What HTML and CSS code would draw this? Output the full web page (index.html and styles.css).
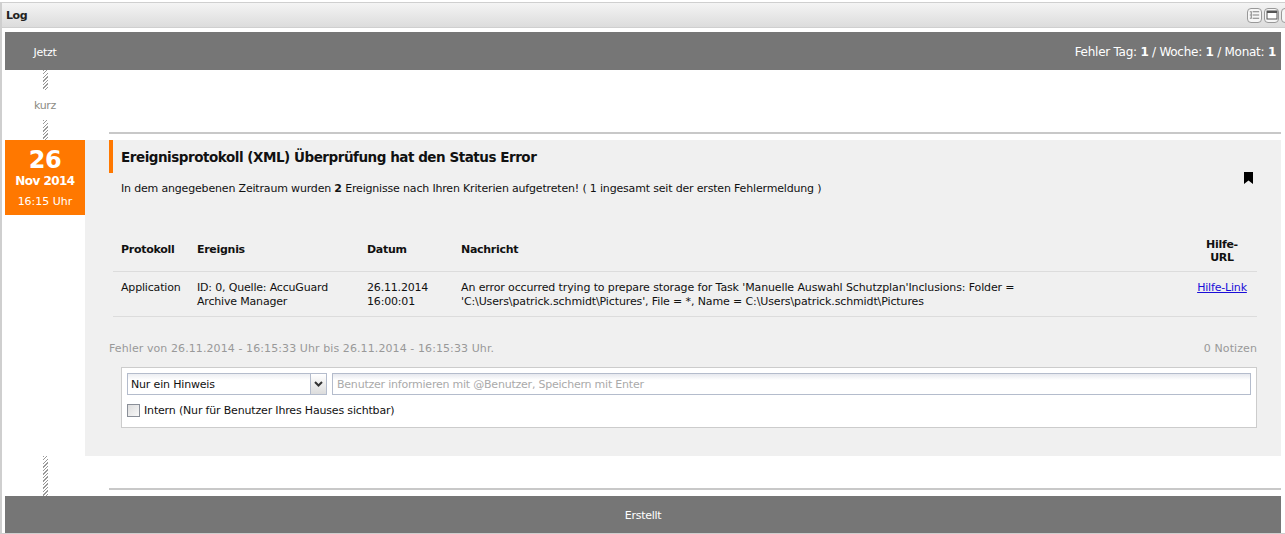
FILE: index.html
```html
<!DOCTYPE html>
<html lang="de">
<head>
<meta charset="utf-8">
<title>Log</title>
<link rel="stylesheet" href="styles.css">
</head>
<body>
<div class="window">
  <header class="titlebar">
    <span class="title">Log</span>
    <div class="tools">
      <span class="tool"><svg width="14" height="12" viewBox="0 0 14 12"><path d="M2 2.500h1M5 2.500h7M2 6h1M5 6h7M2 9.500h1M5 9.500h7M3.500 2v8" fill="none" stroke="#777"/></svg></span>
      <span class="tool"><svg width="12" height="10" viewBox="0 0 12 10"><rect x="1" y="1" width="10" height="8" fill="#fff" stroke="#555"/><path d="M1 2h10" stroke="#555" stroke-width="2"/></svg></span>
      <span class="tool"></span>
    </div>
  </header>
  <div class="content">
    <div class="bar bar-top">
      <span class="bar-label">Jetzt</span>
      <span class="stats">Fehler Tag: <b>1</b> / Woche: <b>1</b> / Monat: <b>1</b></span>
    </div>
    <div class="gap-row">
      <div class="axis">
        <div class="hatch h20"></div>
        <div class="kurz">kurz</div>
        <div class="hatch h20"></div>
      </div>
      <div class="rule-wrap"><div class="rule"></div></div>
    </div>
    <div class="event">
      <div class="date">
        <div class="day">26</div>
        <div class="month">Nov 2014</div>
        <div class="time">16:15 Uhr</div>
      </div>
      <div class="panel">
        <svg class="bookmark" width="9" height="12" viewBox="0 0 9 12"><path d="M0 0h9v12L4.500 8.500 0 12z" fill="#000"/></svg>
        <h2 class="event-title">Ereignisprotokoll (XML) Überprüfung hat den Status Error</h2>
        <p class="summary">In dem angegebenen Zeitraum wurden <b>2</b> Ereignisse nach Ihren Kriterien aufgetreten! ( 1 ingesamt seit der ersten Fehlermeldung )</p>
        <table class="log">
          <thead>
            <tr>
              <th class="c1">Protokoll</th>
              <th class="c2">Ereignis</th>
              <th class="c3">Datum</th>
              <th class="c4">Nachricht</th>
              <th class="c5">Hilfe-<br>URL</th>
            </tr>
          </thead>
          <tbody>
            <tr>
              <td>Application</td>
              <td>ID: 0, Quelle: AccuGuard Archive Manager</td>
              <td>26.11.2014 16:00:01</td>
              <td class="msg">An error occurred trying to prepare storage for Task 'Manuelle Auswahl Schutzplan'Inclusions: Folder = 'C:\Users\patrick.schmidt\Pictures', File = *, Name = C:\Users\patrick.schmidt\Pictures</td>
              <td class="link-cell"><a href="#">Hilfe-Link</a></td>
            </tr>
          </tbody>
        </table>
        <div class="meta">
          <span>Fehler von 26.11.2014 - 16:15:33 Uhr bis 26.11.2014 - 16:15:33 Uhr.</span>
          <span>0 Notizen</span>
        </div>
        <div class="note-box">
          <div class="note-row">
            <div class="select"><span class="select-text">Nur ein Hinweis</span><span class="select-btn"><svg width="9" height="6" viewBox="0 0 9 6"><path d="M1 1l3.500 3.500L8 1" fill="none" stroke="#333" stroke-width="2"/></svg></span></div>
            <div class="input">Benutzer informieren mit @Benutzer, Speichern mit Enter</div>
          </div>
          <label class="check"><span class="checkbox"></span>Intern (Nur für Benutzer Ihres Hauses sichtbar)</label>
        </div>
      </div>
    </div>
    <div class="gap-row end">
      <div class="axis"><div class="hatch h40"></div></div>
      <div class="rule-wrap"><div class="rule"></div></div>
    </div>
    <div class="bar bar-bottom">Erstellt</div>
  </div>
</div>
</body>
</html>
```
FILE: styles.css
```css
* { box-sizing: border-box; }
html, body { margin: 0; padding: 0; height: 100%; overflow: hidden; background: #fff; }
body {
  font-family: "DejaVu Sans", sans-serif;
  font-size: 11px;
  color: #111;
}
.window {
  margin-top: 2px;
  height: 532px;
  width: 1285px;
  border-top: 1px solid #cfcfcf;
  border-left: 2px solid #cfcfcf;
  border-bottom: 1px solid #cfcfcf;
  display: flex;
  flex-direction: column;
}
.titlebar {
  height: 25px;
  flex: none;
  display: flex;
  align-items: center;
  justify-content: space-between;
  background: linear-gradient(#f4f4f4, #dcdcdc);
  border-bottom: 1px solid #cfcfcf;
  padding-left: 4px;
  overflow: hidden;
}
.title { font-weight: 700; font-size: 11px; color: #222; letter-spacing: -.4px; }
.tools { display: flex; gap: 2px; margin-right: -11px; }
.tool {
  width: 15px;
  height: 15px;
  flex: none;
  border: 1px solid #999;
  border-radius: 4px;
  background: #f6f6f6;
  display: flex;
  align-items: center;
  justify-content: center;
}
.content {
  flex: 1;
  padding: 4px 0 0 3px;
  display: flex;
  flex-direction: column;
}
.bar {
  height: 38px;
  flex: none;
  background: #767676;
  color: #fff;
  display: flex;
  align-items: center;
  width: 1276px;
  letter-spacing: -.3px;
}
.bar-top { justify-content: space-between; padding: 2px 5px 0 0; }
.bar-label { width: 80px; text-align: center; }
.bar-bottom { justify-content: center; height: 37px; padding-top: 2px; }
.stats { font-size: 12px; letter-spacing: -.26px; }
.stats b { font-weight: 700; }
.gap-row { height: 70px; flex: none; display: flex; width: 1276px; }
.gap-row.end { height: 40px; }
.axis { width: 80px; display: flex; flex-direction: column; align-items: center; flex: none; }
.hatch {
  width: 5px;
  margin-left: 1px;
  background: repeating-linear-gradient(135deg, #999 0 1px, #fff 1px 2.500px);
}
.h20 { height: 20px; }
.h40 { height: 40px; }
.kurz { height: 30px; line-height: 32px; color: #8c8c84; letter-spacing: -.3px; }
.rule-wrap { flex: 1; padding: 62px 0 0 24px; }
.end .rule-wrap { padding-top: 32px; }
.rule { height: 2px; background: #c8c8c8; }
.event { display: flex; flex: none; width: 1276px; }
.date {
  width: 80px;
  height: 75px;
  flex: none;
  background: #ff7800;
  color: #fff;
  text-align: center;
  font-weight: 700;
}
.day { font-size: 24px; line-height: 26px; margin-top: 7px; letter-spacing: -.5px; }
.month { font-size: 12px; line-height: 16px; letter-spacing: -.55px; }
.time { font-size: 11px; line-height: 15px; margin-top: 5px; font-weight: 400; }
.panel {
  flex: 1;
  position: relative;
  height: 316px;
  background: #f0f0f0;
  padding-left: 24px;
}
.bookmark { position: absolute; left: 1159px; top: 32px; }
.event-title {
  margin: 0;
  height: 33px;
  border-left: 4px solid #ff7800;
  padding-left: 8px;
  font-size: 13.5px;
  line-height: 35px;
  font-weight: 700;
  color: #111;
  letter-spacing: -.47px;
}
.summary { margin: 8px 0 0 12px; line-height: 15px; letter-spacing: -.175px; }
.log {
  margin: 39px 0 0 4px;
  width: 1144px;
  border-collapse: collapse;
  table-layout: fixed;
  letter-spacing: -.18px;
}
.log th { text-align: left; font-weight: 700; padding: 0 8px 6px; height: 36px; vertical-align: middle; border-bottom: 1px solid #dcdcdc; line-height: 14px; letter-spacing: -.29px; }
.log td { vertical-align: top; padding: 9px 8px 7px; line-height: 14px; border-bottom: 1px solid #dcdcdc; }
.log .msg { letter-spacing: -.12px; }
.c1 { width: 76px; }
.c2 { width: 170px; }
.c3 { width: 94px; }
.c5 { width: 70px; }
.log .c5 { text-align: center; padding-bottom: 4px; line-height: 13px; }
.link-cell { text-align: center; }
.link-cell a { color: #1a0dd8; }
.meta {
  margin: 24px 24px 0 0;
  display: flex;
  justify-content: space-between;
  color: #999;
  line-height: 15px;
  letter-spacing: .09px;
}
.note-box {
  margin: 11px 24px 0 12px;
  height: 61px;
  background: #fff;
  border: 1px solid #ccc;
  padding: 5px;
  letter-spacing: -.17px;
}
.note-row { display: flex; gap: 5px; height: 22px; }
.select {
  width: 200px;
  flex: none;
  display: flex;
  border: 1px solid #b4bccc;
  background: linear-gradient(#eceef2, #fff 30%);
}
.select-text { flex: 1; padding-left: 3px; line-height: 22px; color: #111; }
.select-btn {
  width: 16px;
  border-left: 1px solid #b4bccc;
  background: linear-gradient(#fff, #dcdcdc);
  display: flex;
  align-items: center;
  justify-content: center;
}
.input {
  flex: 1;
  border: 1px solid #b4bccc;
  background: linear-gradient(#e6e8ee, #fff 30%);
  color: #aaa;
  padding-left: 4px;
  line-height: 22px;
  letter-spacing: -.22px;
}
.check { display: flex; align-items: center; margin-top: 9px; height: 14px; color: #111; }
.checkbox {
  width: 13px;
  height: 13px;
  margin-right: 4px;
  border: 1px solid #8a8f98;
  background: linear-gradient(135deg, #ddd, #f8f8f8);
}
```
